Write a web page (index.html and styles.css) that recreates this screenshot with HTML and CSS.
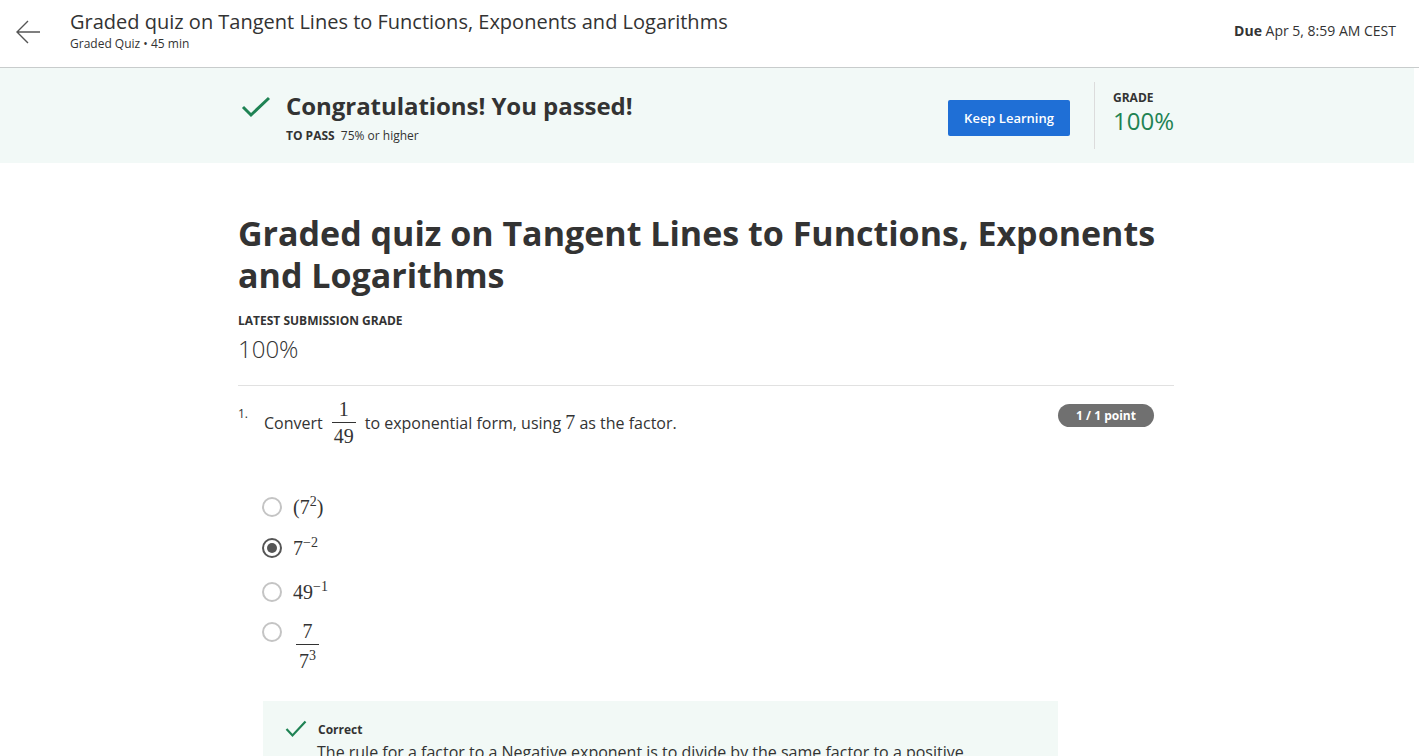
FILE: index.html
```html
<!DOCTYPE html>
<html>
<head>
<meta charset="utf-8">
<link rel="stylesheet" href="styles.css">
</head>
<body>
<header class="topbar">
  <div class="back">
    <svg width="26" height="24" viewBox="0 0 26 24"><path d="M13 1 L2 12 L13 23 M2 12 H25" fill="none" stroke="#555" stroke-width="1.4"/></svg>
  </div>
  <div class="titles">
    <div class="page-title">Graded quiz on Tangent Lines to Functions, Exponents and Logarithms</div>
    <div class="page-sub">Graded Quiz • 45 min</div>
  </div>
  <div class="due"><b>Due</b> Apr 5, 8:59 AM CEST</div>
</header>

<section class="banner">
  <div class="banner-inner">
    <div class="pass">
      <svg class="check" width="30" height="22" viewBox="0 0 30 22"><path d="M2 11 L10 19 L28 2" fill="none" stroke="#1f8354" stroke-width="3"/></svg>
      <div>
        <div class="congrats">Congratulations! You passed!</div>
        <div class="topass"><b>TO PASS</b> 75% or higher</div>
      </div>
    </div>
    <div class="actions">
      <button class="btn">Keep Learning</button>
      <div class="grade">
        <div class="grade-label">GRADE</div>
        <div class="grade-val">100%</div>
      </div>
    </div>
  </div>
</section>

<main class="content">
  <h1 class="quiz-title">Graded quiz on Tangent Lines to Functions, Exponents and Logarithms</h1>
  <div class="latest-label">LATEST SUBMISSION GRADE</div>
  <div class="latest-val">100%</div>
  <hr class="rule">
  <div class="question">
    <div class="qnum">1.</div>
    <div class="qtext">
      <span>Convert</span>
      <span class="frac m"><span class="num">1</span><span class="den">49</span></span>
      <span>to exponential form, using <span class="m">7</span> as the factor.</span>
    </div>
    <div class="points">1 / 1 point</div>
  </div>
  <div class="options">
    <div class="opt"><span class="radio"></span><span class="m">(7<sup>2</sup>)</span></div>
    <div class="opt"><span class="radio checked"></span><span class="m">7<sup>−2</sup></span></div>
    <div class="opt"><span class="radio"></span><span class="m">49<sup>−1</sup></span></div>
    <div class="opt"><span class="radio"></span><span class="frac m small"><span class="num">7</span><span class="den">7<sup>3</sup></span></span></div>
  </div>
  <div class="feedback">
    <div class="fb-head">
      <svg width="22" height="18" viewBox="0 0 22 18"><path d="M1.5 9 L7.5 15.5 L20.5 1.5" fill="none" stroke="#1f8354" stroke-width="2.2"/></svg>
      <span>Correct</span>
    </div>
    <p class="fb-text">The rule for  a factor to a Negative exponent is to divide by the same factor to a positive</p>
  </div>
</main>
</body>
</html>
```
FILE: styles.css
```css
* { box-sizing: border-box; }
html, body { margin: 0; padding: 0; overflow: hidden; }
body {
  font-family: "Open Sans", "Liberation Sans", sans-serif;
  color: #333;
  background: #fff;
  width: 1419px;
  height: 756px;
}
.topbar {
  height: 68px;
  border-bottom: 1px solid #c8cccc;
  display: flex;
  align-items: flex-start;
  padding: 0 23px 0 15px;
}
.back { padding-top: 20px; width: 55px; }
.titles { flex: 1; padding-top: 9px; }
.page-title { font-size: 20px; line-height: 26px; color: #333; }
.page-sub { font-size: 12px; line-height: 16px; color: #333; margin-top: 1px; }
.due { font-size: 14px; padding-top: 21px; color: #333; }
.due b { font-weight: 700; }

.banner {
  background: #f2f9f7;
  height: 95px;
  margin-right: 5px;
}
.banner-inner {
  width: 936px;
  margin-left: 238px;
  display: flex;
  justify-content: space-between;
  height: 100%;
}
.pass { display: flex; align-items: flex-start; padding-top: 22px; }
.check { margin-left: 3px; margin-top: 6px; margin-right: 15px; }
.congrats { font-size: 24px; font-weight: 700; line-height: 32px; color: #333; letter-spacing: -0.05px; }
.topass { font-size: 12px; line-height: 16px; margin-top: 6px; color: #333; }
.topass b { margin-right: 3px; }
.actions { display: flex; align-items: stretch; padding: 14px 0 14px; }
.btn {
  align-self: flex-start;
  margin-top: 18px;
  background: #1f6fd6;
  color: #fff;
  border: 0;
  border-radius: 2px;
  font-family: "Open Sans", sans-serif;
  font-weight: 600;
  font-size: 13px;
  width: 122px;
  height: 36px;
  padding: 0;
}
.grade {
  border-left: 1px solid #dcdcdc;
  margin-left: 24px;
  padding-left: 18px;
  width: 80px;
  padding-top: 9px;
}
.grade-label { font-size: 12px; font-weight: 700; line-height: 14px; margin-bottom: 3px; }
.grade-val { font-size: 24px; line-height: 26px; color: #1f8354; }

.content { width: 936px; margin-left: 238px; }
.quiz-title {
  font-size: 34px;
  font-weight: 700;
  line-height: 42px;
  margin: 49px 0 0;
  color: #333;
}
.latest-label { font-size: 12px; font-weight: 700; margin-top: 17px; line-height: 16px; }
.latest-val { font-size: 24px; line-height: 30px; margin-top: 5px; font-weight: 300; }
.rule { border: 0; border-top: 1px solid #e1e1e1; margin: 21px 0 0; }

.question { display: flex; align-items: flex-start; margin-top: 16px; }
.qnum { font-size: 12px; width: 26px; padding-top: 3px; }
.qtext { flex: 1; display: flex; align-items: center; font-size: 16px; gap: 9px; margin-top: -5px; }
.m { font-family: "Liberation Serif", "DejaVu Serif", serif; font-size: 20px; }
.frac { display: inline-flex; flex-direction: column; align-items: center; line-height: 24px; }
.frac .num { padding: 0 2px 1px; }
.frac .den { border-top: 1px solid #333; padding: 1px 2px 0; }
.points {
  margin-top: 2px;
  margin-right: 20px;
  background: #707070;
  color: #fff;
  font-size: 12px;
  font-weight: 700;
  border-radius: 12px;
  height: 23px;
  line-height: 23px;
  width: 96px;
  text-align: center;
}
sup { font-size: 14px; vertical-align: 8px; line-height: 0; }

.options { margin-top: 46px; margin-left: 24px; display: flex; flex-direction: column; }
.opt { display: flex; align-items: flex-start; gap: 11px; height: 41px; }
.opt:nth-child(2) { height: 44px; }
.opt:nth-child(3) { height: 40px; }
.opt:nth-child(4) { height: 82px; }
.radio {
  width: 20px; height: 20px; border-radius: 50%;
  border: 2px solid #c4c4c4;
  margin-top: 3px;
  display: flex; align-items: center; justify-content: center;
  flex: none;
}
.radio.checked { border-color: #555; }
.radio.checked::after { content: ""; width: 10px; height: 10px; border-radius: 50%; background: #555; }
.opt .m { line-height: 26px; }
.frac.small { line-height: 26px; margin-top: -1px; margin-left: 3px; }
.frac.small .num { padding-bottom: 0; }
.frac.small .den { padding: 3px 3px 0; }

.feedback {
  margin-left: 25px;
  width: 795px;
  background: #f2f9f6;
  padding: 19px 22px 0;
  height: 80px;
}
.fb-head { display: flex; align-items: center; gap: 11px; font-size: 12px; font-weight: 700; }
.fb-text { margin: 3px 0 0 32px; font-size: 16px; }
```
